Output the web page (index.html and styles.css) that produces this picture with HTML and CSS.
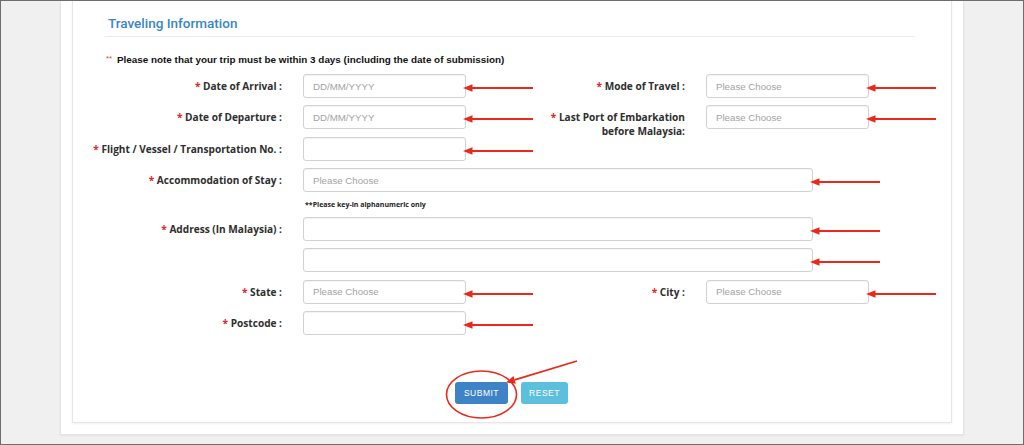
FILE: index.html
```html
<!DOCTYPE html>
<html lang="en">
<head>
    <meta charset="UTF-8">
    <title>Traveling Information</title>
    <link rel="stylesheet" href="styles.css">
</head>
<body>
    <div class="frame">
        <div class="panel">
            <div class="card">
                <h3 class="section-title">Traveling Information</h3>
                <p class="trip-note"><span class="note-mark">**</span> Please note that your trip must be within 3 days (including the date of submission)</p>

                <div class="form-grid">
                    <label class="field-label col-a"><span><span class="req">*</span> Date of Arrival :</span></label>
                    <div class="field col-b">
                        <input type="text" placeholder="DD/MM/YYYY">
                        <svg class="arrow" width="70" height="8" viewBox="0 0 70 8"><line x1="7" y1="4" x2="70" y2="4" stroke="#e8291c" stroke-width="2"/><polygon points="0,4 9.5,0.3 9.5,7.7" fill="#e8291c"/></svg>
                    </div>
                    <label class="field-label col-c"><span><span class="req">*</span> Mode of Travel :</span></label>
                    <div class="field col-d">
                        <input type="text" placeholder="Please Choose">
                        <svg class="arrow" width="70" height="8" viewBox="0 0 70 8"><line x1="7" y1="4" x2="70" y2="4" stroke="#e8291c" stroke-width="2"/><polygon points="0,4 9.5,0.3 9.5,7.7" fill="#e8291c"/></svg>
                    </div>

                    <label class="field-label col-a"><span><span class="req">*</span> Date of Departure :</span></label>
                    <div class="field col-b">
                        <input type="text" placeholder="DD/MM/YYYY">
                        <svg class="arrow" width="70" height="8" viewBox="0 0 70 8"><line x1="7" y1="4" x2="70" y2="4" stroke="#e8291c" stroke-width="2"/><polygon points="0,4 9.5,0.3 9.5,7.7" fill="#e8291c"/></svg>
                    </div>
                    <label class="field-label col-c"><span><span class="req">*</span> Last Port of Embarkation<br>before Malaysia:</span></label>
                    <div class="field col-d">
                        <input type="text" placeholder="Please Choose">
                        <svg class="arrow" width="70" height="8" viewBox="0 0 70 8"><line x1="7" y1="4" x2="70" y2="4" stroke="#e8291c" stroke-width="2"/><polygon points="0,4 9.5,0.3 9.5,7.7" fill="#e8291c"/></svg>
                    </div>

                    <label class="field-label col-a"><span><span class="req">*</span> Flight / Vessel / Transportation No. :</span></label>
                    <div class="field col-b">
                        <input type="text">
                        <svg class="arrow" width="70" height="8" viewBox="0 0 70 8"><line x1="7" y1="4" x2="70" y2="4" stroke="#e8291c" stroke-width="2"/><polygon points="0,4 9.5,0.3 9.5,7.7" fill="#e8291c"/></svg>
                    </div>

                    <label class="field-label col-a"><span><span class="req">*</span> Accommodation of Stay :</span></label>
                    <div class="field wide">
                        <input type="text" placeholder="Please Choose">
                        <svg class="arrow" width="70" height="8" viewBox="0 0 70 8"><line x1="7" y1="4" x2="70" y2="4" stroke="#e8291c" stroke-width="2"/><polygon points="0,4 9.5,0.3 9.5,7.7" fill="#e8291c"/></svg>
                    </div>

                    <div class="key-note">**Please key-in alphanumeric only</div>

                    <label class="field-label col-a"><span><span class="req">*</span> Address (In Malaysia) :</span></label>
                    <div class="field wide">
                        <input type="text">
                        <svg class="arrow" width="70" height="8" viewBox="0 0 70 8"><line x1="7" y1="4" x2="70" y2="4" stroke="#e8291c" stroke-width="2"/><polygon points="0,4 9.5,0.3 9.5,7.7" fill="#e8291c"/></svg>
                    </div>
                    <div class="field wide">
                        <input type="text">
                        <svg class="arrow" width="70" height="8" viewBox="0 0 70 8"><line x1="7" y1="4" x2="70" y2="4" stroke="#e8291c" stroke-width="2"/><polygon points="0,4 9.5,0.3 9.5,7.7" fill="#e8291c"/></svg>
                    </div>

                    <label class="field-label col-a"><span><span class="req">*</span> State :</span></label>
                    <div class="field col-b">
                        <input type="text" placeholder="Please Choose">
                        <svg class="arrow" width="70" height="8" viewBox="0 0 70 8"><line x1="7" y1="4" x2="70" y2="4" stroke="#e8291c" stroke-width="2"/><polygon points="0,4 9.5,0.3 9.5,7.7" fill="#e8291c"/></svg>
                    </div>
                    <label class="field-label col-c"><span><span class="req">*</span> City :</span></label>
                    <div class="field col-d">
                        <input type="text" placeholder="Please Choose">
                        <svg class="arrow" width="70" height="8" viewBox="0 0 70 8"><line x1="7" y1="4" x2="70" y2="4" stroke="#e8291c" stroke-width="2"/><polygon points="0,4 9.5,0.3 9.5,7.7" fill="#e8291c"/></svg>
                    </div>

                    <label class="field-label col-a"><span><span class="req">*</span> Postcode :</span></label>
                    <div class="field col-b">
                        <input type="text">
                        <svg class="arrow" width="70" height="8" viewBox="0 0 70 8"><line x1="7" y1="4" x2="70" y2="4" stroke="#e8291c" stroke-width="2"/><polygon points="0,4 9.5,0.3 9.5,7.7" fill="#e8291c"/></svg>
                    </div>
                </div>

                <div class="actions">
                    <button class="btn btn-submit">SUBMIT</button>
                    <button class="btn btn-reset">RESET</button>
                    <!-- annotation drawn over the buttons -->
                    <svg class="callout" width="145" height="70" viewBox="0 0 145 70">
                        <ellipse cx="41.5" cy="40.5" rx="35" ry="23.5" fill="none" stroke="#e8291c" stroke-width="1.6"/>
                        <line x1="137" y1="7" x2="74.6" y2="25.9" stroke="#e8291c" stroke-width="1.8"/>
                        <polygon points="66,28.5 75.8,29.7 73.4,22.1" fill="#e8291c"/>
                    </svg>
                </div>
            </div>
        </div>
    </div>
</body>
</html>
```

FILE: styles.css
```css
body {
    margin: 0;
    padding: 0;
    background-color: #f0f0f0;
}

.frame {
    width: 1024px;
    height: 445px;
    box-sizing: border-box;
    border: 1px solid #6d6d6d;
    background-color: #f0f0f0;
    padding: 0 59px;
    overflow: hidden;
}

.panel {
    background-color: #fff;
    border: 1px solid #e3e3e3;
    border-top: none;
    padding: 0 11px 11px;
    box-shadow: 0 1px 2px rgba(0, 0, 0, .05);
}

.card {
    background-color: #fff;
    border: 1px solid #e6e6e6;
    border-top: none;
    padding: 0 36px 18px 32px;
    box-shadow: 0 1px 2px rgba(0, 0, 0, .06);
}

.section-title {
    margin: 0;
    padding: 14px 0 4px 3px;
    font-family: Roboto, "Liberation Sans", sans-serif;
    font-weight: 500;
    font-size: 13.5px;
    line-height: 17px;
    color: #3a85c8;
    border-bottom: 1px solid #ebebeb;
}

.trip-note {
    margin: 16px 0 7px 1px;
    font-family: "Liberation Sans", Arial, sans-serif;
    font-weight: bold;
    font-size: 9.9px;
    line-height: 14px;
    color: #111;
}

.note-mark {
    color: #e8434a;
    font-weight: normal;
    font-size: 8px;
    line-height: 0;
    vertical-align: 2px;
    margin-right: 2px;
}

.form-grid {
    display: grid;
    grid-template-columns: 177px 163px 198px 163px 1fr;
    grid-template-rows: repeat(4, 24px) 10px repeat(4, 24px);
    column-gap: 21px;
    row-gap: 7.4px;
}

.col-a { grid-column: 1; }
.col-b { grid-column: 2; }
.col-c { grid-column: 3; }
.col-d { grid-column: 4; }

.field-label {
    display: flex;
    justify-content: flex-end;
    align-items: flex-start;
    font-family: "Open Sans", sans-serif;
    font-weight: bold;
    font-size: 10.1px;
    line-height: 14px;
    color: #2e2e2e;
    text-align: right;
    white-space: nowrap;
    padding-top: 5px;
}

.req {
    color: #e0262d;
}

.field {
    position: relative;
}

.field.wide {
    grid-column: 2 / 6;
    width: 510px;
}

.field input {
    display: block;
    width: 100%;
    height: 24px;
    box-sizing: border-box;
    margin: 0;
    padding: 0 9px;
    border: 1px solid #d2d2d2;
    border-radius: 3px;
    box-shadow: inset 0 1px 1px rgba(0, 0, 0, .05);
    font-family: "Liberation Sans", Arial, sans-serif;
    font-size: 9.7px;
    color: #555;
    background-color: #fff;
}

.field input::placeholder {
    color: #a3a3a3;
}

.arrow {
    position: absolute;
    left: calc(100% - 3px);
    top: 50%;
    margin-top: -2px;
}

.key-note {
    grid-column: 2 / 5;
    font-family: "Open Sans", sans-serif;
    font-weight: bold;
    font-size: 7px;
    line-height: 10px;
    color: #222;
    padding-left: 2px;
}

.actions {
    position: relative;
    display: flex;
    justify-content: center;
    gap: 13px;
    margin-top: 47px;
    padding-left: 3px;
}

.btn {
    height: 22px;
    border: none;
    border-radius: 3px;
    color: #fff;
    font-family: "Liberation Sans", Arial, sans-serif;
    font-size: 8.5px;
    letter-spacing: .5px;
    padding: 0;
    cursor: pointer;
}

.btn-submit {
    width: 53px;
    background-color: #3e83c5;
}

.btn-reset {
    width: 47px;
    background-color: #5bbfdd;
}

.callout {
    position: absolute;
    left: 335px;
    top: -28px;
    pointer-events: none;
}
```
